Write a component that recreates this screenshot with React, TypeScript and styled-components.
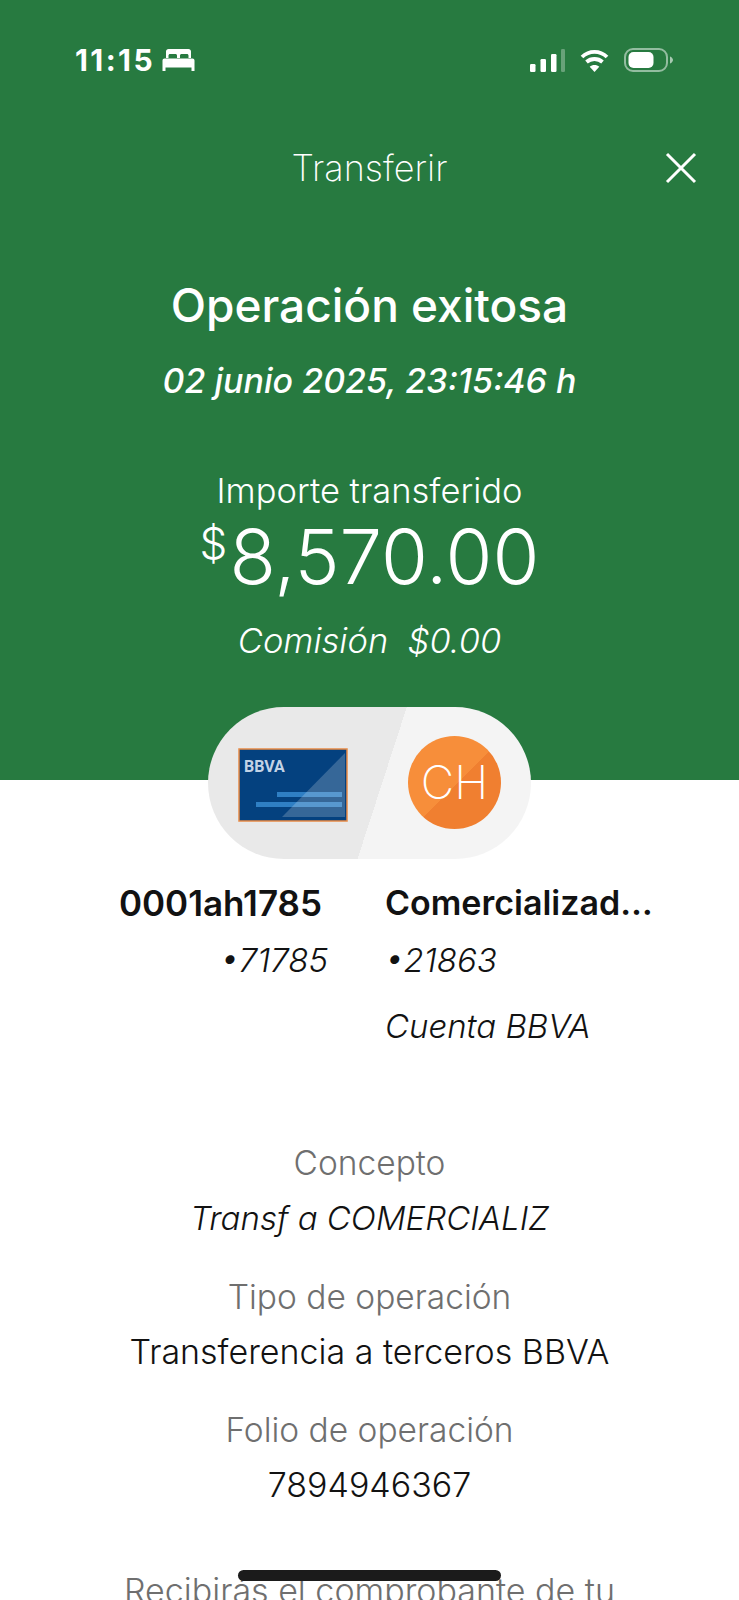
import React from "react";
import styled, { createGlobalStyle } from "styled-components";

const GlobalStyle = createGlobalStyle`
  html, body {
    margin: 0;
    padding: 0;
    background: #fff;
    font-family: "Inter", "Liberation Sans", sans-serif;
  }
`;

const Screen = styled.div`
  position: relative;
  width: 739px;
  height: 1600px;
  overflow: hidden;
  background: #fff;
`;

const Hero = styled.header`
  height: 780px;
  background: #277a40;
  color: #fff;
  display: flex;
  flex-direction: column;
  align-items: center;
`;

const StatusBar = styled.div`
  align-self: stretch;
  height: 24px;
  margin-top: 48px;
  padding: 0 66px 0 75px;
  display: flex;
  align-items: center;
  justify-content: space-between;
`;

const StatusGroup = styled.div<{ $gap: number }>`
  display: flex;
  align-items: center;
  gap: ${(p) => p.$gap}px;
`;

const Clock = styled.span`
  font-size: 30px;
  font-weight: 700;
  letter-spacing: 2.4px;
  line-height: 24px;
`;

const TopBar = styled.div`
  align-self: stretch;
  position: relative;
  margin-top: 72px;
  height: 48px;
  display: flex;
  align-items: center;
  justify-content: center;
`;

const TopTitle = styled.h2`
  margin: 0;
  font-size: 36px;
  font-weight: 200;
  line-height: 48px;
`;

const CloseButton = styled.button`
  position: absolute;
  right: 42px;
  top: 8px;
  width: 32px;
  height: 32px;
  padding: 0;
  border: 0;
  background: none;
  display: flex;
`;

const Headline = styled.h1`
  margin: 87px 0 0;
  font-size: 46px;
  font-weight: 500;
  line-height: 52px;
`;

const Stamp = styled.div`
  margin-top: 28px;
  font-size: 34px;
  font-weight: 500;
  font-style: italic;
  line-height: 44px;
`;

const AmountLabel = styled.div`
  margin-top: 66px;
  font-size: 34.500px;
  font-weight: 300;
  line-height: 44px;
`;

const Amount = styled.div`
  font-size: 76px;
  font-weight: 300;
  line-height: 86px;
  display: flex;
  align-items: flex-start;
`;

const Currency = styled.span`
  font-size: 44px;
  line-height: 60px;
  margin-right: 2px;
`;

const Fee = styled.div`
  margin-top: 20px;
  font-size: 34.500px;
  font-weight: 300;
  font-style: italic;
  line-height: 44px;
  white-space: pre;
`;

const Parties = styled.section`
  margin-top: -73px;
  display: flex;
  flex-direction: column;
  align-items: center;
`;

const Pill = styled.div`
  width: 323px;
  height: 152px;
  border-radius: 76px;
  background: linear-gradient(108deg, #e9e9e9 53.4%, #f4f4f4 53.4%);
  box-sizing: border-box;
  padding: 0 30px;
  display: flex;
  align-items: center;
  justify-content: space-between;
`;

const CardArt = styled.svg`
  margin-top: 3px;
`;

const Avatar = styled.div`
  width: 93px;
  height: 93px;
  margin-top: -2px;
  border-radius: 50%;
  background: linear-gradient(135deg, #f78e3a 52%, #f07f30 52%);
  color: #fff;
  font-size: 46px;
  font-weight: 200;
  display: flex;
  align-items: center;
  justify-content: center;
`;

const Accounts = styled.div`
  margin-top: 21px;
  align-self: stretch;
  display: grid;
  grid-template-columns: 328px 1fr;
  column-gap: 57px;
  color: #121212;
`;

const Account = styled.div<{ $end?: boolean }>`
  display: flex;
  flex-direction: column;
  align-items: ${(p) => (p.$end ? "flex-end" : "flex-start")};
`;

const AccountName = styled.div<{ $inset?: number }>`
  width: ${(p) => (p.$inset ? "auto" : "272px")};
  margin-right: ${(p) => p.$inset ?? 0}px;
  font-size: ${(p) => (p.$inset ? 35 : 34)}px;
  font-weight: 600;
  line-height: 46px;
  white-space: nowrap;
  overflow: hidden;
  text-overflow: ellipsis;
`;

const AccountLine = styled.div<{ $gap: number }>`
  margin-top: ${(p) => p.$gap}px;
  font-size: 33px;
  font-weight: 300;
  font-style: italic;
  line-height: 44px;
`;

const Details = styled.dl`
  margin: 93px 0 0;
  display: flex;
  flex-direction: column;
  align-items: center;
  text-align: center;
`;

const Term = styled.dt<{ $first?: boolean }>`
  margin-top: ${(p) => (p.$first ? 0 : 34.5)}px;
  font-size: 33.500px;
  font-weight: 300;
  line-height: 44px;
  color: #6f6f6f;
`;

const Value = styled.dd<{ $italic?: boolean }>`
  margin: 11px 0 0;
  font-size: ${(p) => (p.$italic ? 33 : 34)}px;
  font-weight: 300;
  font-style: ${(p) => (p.$italic ? "italic" : "normal")};
  line-height: 44px;
  color: #121212;
`;

const Notice = styled.p`
  margin: 62px 0 0;
  text-align: center;
  font-size: 34px;
  font-weight: 300;
  line-height: 44px;
  color: #6f6f6f;
`;

const HomeIndicator = styled.div`
  position: absolute;
  left: 238px;
  top: 1570px;
  width: 263px;
  height: 11px;
  border-radius: 6px;
  background: #1b1b1b;
`;

const BedIcon = () => (
  <svg width="33" height="22" viewBox="0 0 33 22" fill="#fff">
    <path d="M4 2.500C4 1.100 5.100 0 6.500 0h20C27.900 0 29 1.100 29 2.500V9h-2.500V6.500c0-.8-.7-1.500-1.500-1.500h-5.500c-.8 0-1.500.7-1.500 1.500V9h-3V6.500c0-.8-.7-1.500-1.500-1.500H8C7.200 5 6.500 5.700 6.500 6.500V9H4z" />
    <path d="M2.500 9.500h28c1.100 0 2 .9 2 2V22h-3v-3.500h-26V22h-3V11.500c0-1.100.9-2 2-2z" />
  </svg>
);

const SignalIcon = () => (
  <svg width="35" height="23" viewBox="0 0 35 23">
    <rect x="0" y="15" width="5.500" height="8" rx="1.200" fill="#fff" />
    <rect x="10.500" y="10" width="5.500" height="13" rx="1.200" fill="#fff" />
    <rect x="21" y="5" width="5.500" height="18" rx="1.200" fill="#fff" />
    <rect x="31" y="0" width="4" height="23" rx="1.200" fill="#fff" opacity="0.3" />
  </svg>
);

const WifiIcon = () => (
  <svg width="29" height="23" viewBox="0 0 29 23" fill="none" stroke="#fff" strokeWidth="3.800">
    <path d="M2 8C9 1.200 20 1.200 27 8" />
    <path d="M6.500 13c4.500-4 11.500-4 16 0" />
    <path d="M14.500 23l-4.800-5.200c2.700-2.400 6.900-2.400 9.600 0z" fill="#fff" stroke="none" />
  </svg>
);

const BatteryIcon = () => (
  <svg width="49" height="24" viewBox="0 0 49 24">
    <rect x="1" y="1" width="42" height="22" rx="8" fill="none" stroke="#fff" strokeWidth="2" opacity="0.5" />
    <rect x="4.500" y="4" width="25" height="16" rx="5" fill="#fff" />
    <path d="M46 8.500c1.700.6 3 2 3 3.500s-1.300 2.900-3 3.500z" fill="#fff" opacity="0.6" />
  </svg>
);

const CloseIcon = () => (
  <svg width="32" height="32" viewBox="0 0 32 32" stroke="#fff" strokeWidth="3" fill="none">
    <path d="M2 2l28 28M30 2L2 30" />
  </svg>
);

const BankCard = () => (
  <CardArt width="110" height="74" viewBox="0 0 110 74">
    <rect x="1" y="1" width="108" height="72" fill="#04417f" stroke="#e88a45" strokeWidth="1.500" />
    <text x="6" y="24" fontFamily="Roboto, sans-serif" fontSize="16" fontWeight="700" fill="#c3d3e6">
      BBVA
    </text>
    <rect x="39" y="44" width="65" height="5" fill="#2f7fc4" />
    <rect x="18" y="54" width="86" height="5" fill="#2f7fc4" />
    <path d="M107 5v64H44z" fill="#fff" opacity="0.2" />
  </CardArt>
);

export default function App() {
  return (
    <>
      <GlobalStyle />
      <Screen>
        <Hero>
          <StatusBar>
            <StatusGroup $gap={7}>
              <Clock>11:15</Clock>
              <BedIcon />
            </StatusGroup>
            <StatusGroup $gap={15}>
              <SignalIcon />
              <WifiIcon />
              <BatteryIcon />
            </StatusGroup>
          </StatusBar>
          <TopBar>
            <TopTitle>Transferir</TopTitle>
            <CloseButton aria-label="Cerrar">
              <CloseIcon />
            </CloseButton>
          </TopBar>
          <Headline>Operación exitosa</Headline>
          <Stamp>02 junio 2025, 23:15:46 h</Stamp>
          <AmountLabel>Importe transferido</AmountLabel>
          <Amount>
            <Currency>$</Currency>8,570.00
          </Amount>
          <Fee>{"Comisión  $0.00"}</Fee>
        </Hero>

        <Parties>
          <Pill>
            <BankCard />
            <Avatar>CH</Avatar>
          </Pill>
          <Accounts>
            <Account $end>
              <AccountName $inset={6}>0001ah1785</AccountName>
              <AccountLine $gap={12}>•71785</AccountLine>
            </Account>
            <Account>
              <AccountName>Comercializadora</AccountName>
              <AccountLine $gap={12}>•21863</AccountLine>
              <AccountLine $gap={22}>Cuenta BBVA</AccountLine>
            </Account>
          </Accounts>
        </Parties>

        <Details>
          <Term $first>Concepto</Term>
          <Value $italic>Transf a COMERCIALIZ</Value>
          <Term>Tipo de operación</Term>
          <Value>Transferencia a terceros BBVA</Value>
          <Term>Folio de operación</Term>
          <Value>7894946367</Value>
        </Details>

        <Notice>Recibirás el comprobante de tu</Notice>
        <HomeIndicator />
      </Screen>
    </>
  );
}
